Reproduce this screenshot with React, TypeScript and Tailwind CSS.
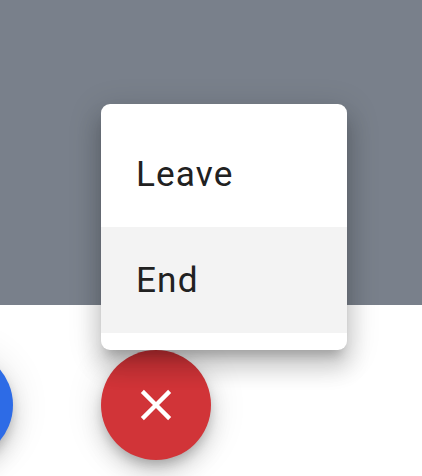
const fabShadow =
  "shadow-[0_6.6px_11px_-2.2px_rgba(0,0,0,0.2),0_13.2px_22px_0_rgba(0,0,0,0.14),0_2.2px_39.6px_0_rgba(0,0,0,0.12)]";

function EndMenu() {
  return (
    <div
      role="menu"
      className="absolute bottom-full left-0 z-10 flex h-[246px] w-[246px] flex-col overflow-hidden rounded-[9px] bg-white py-[17px] text-[35.2px] leading-[53px] tracking-[1.1px] text-[#212121] shadow-[0_11px_11px_-6.6px_rgba(0,0,0,0.2),0_17.6px_22px_2.2px_rgba(0,0,0,0.14),0_6.6px_30.8px_4.4px_rgba(0,0,0,0.12)]"
    >
      <button role="menuitem" className="flex h-[106px] w-full items-center px-[35px]">
        Leave
      </button>
      <button role="menuitem" className="flex h-[106px] w-full items-center bg-[#f3f3f3] px-[35px]">
        End
      </button>
    </div>
  );
}

export default function App() {
  return (
    <main className="flex h-[476px] w-[422px] flex-col overflow-hidden bg-white font-['Roboto',sans-serif]">
      <section className="h-[305px] shrink-0 bg-[#79808b]" />
      <footer className="relative -ml-[97px] flex h-[171px] shrink-0 gap-[88px] pt-[45px]">
        <button aria-label="Microphone" className={`size-[110px] rounded-full bg-[#2d6be6] ${fabShadow}`} />
        <div className="relative size-[110px]">
          <button
            aria-label="Leave call"
            className={`flex size-[110px] items-center justify-center rounded-full bg-[#d13438] text-white ${fabShadow}`}
          >
            <svg className="size-[52px]" viewBox="0 0 24 24" fill="currentColor">
              <path d="M19 6.41 17.59 5 12 10.59 6.41 5 5 6.41 10.59 12 5 17.59 6.41 19 12 13.41 17.59 19 19 17.59 13.41 12z" />
            </svg>
          </button>
          <EndMenu />
        </div>
      </footer>
    </main>
  );
}
